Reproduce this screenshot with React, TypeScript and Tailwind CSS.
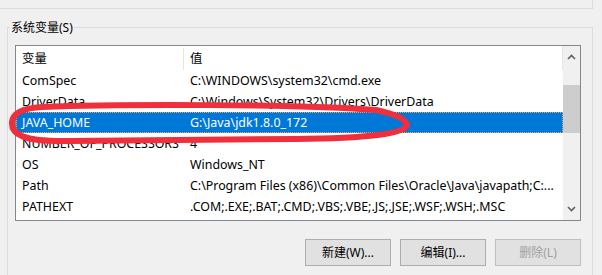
import React from "react";

const ROWS = [
  { name: "ComSpec", value: "C:\\WINDOWS\\system32\\cmd.exe" },
  { name: "DriverData", value: "C:\\Windows\\System32\\Drivers\\DriverData" },
  { name: "JAVA_HOME", value: "G:\\Java\\jdk1.8.0_172", selected: true },
  { name: "NUMBER_OF_PROCESSORS", value: "4" },
  { name: "OS", value: "Windows_NT" },
  { name: "Path", value: "C:\\Program Files (x86)\\Common Files\\Oracle\\Java\\javapath;C:..." },
  { name: "PATHEXT", value: ".COM;.EXE;.BAT;.CMD;.VBS;.VBE;.JS;.JSE;.WSF;.WSH;.MSC" },
];

function Button({ label, disabled }: { label: string; disabled?: boolean }) {
  return (
    <div
      className={`w-[86px] h-[27px] flex items-center justify-center bg-[#e1e1e1] border text-[12px] ${
        disabled ? "text-[#a0a0a0] border-[#bfbfbf]" : "text-black border-[#adadad]"
      }`}
    >
      {label}
    </div>
  );
}

export default function App() {
  return (
    <div
      className="relative w-[602px] h-[275px] overflow-hidden bg-[#f0f0f0] text-[12px] text-black"
      style={{ fontFamily: '"Noto Sans", "Noto Sans CJK SC", sans-serif' }}
    >
      {/* bottom edge of the user variables group */}
      <div className="w-[593px] h-[9px] border-b border-r border-[#dcdcdc]" />

      {/* System variables group box */}
      <div className="relative ml-[7px] mt-[18px] w-[586px] h-[260px] border-t border-l border-r border-[#dcdcdc] pl-[7px] pr-[11px] pt-[17px]">
        <span className="absolute -top-[9px] left-[2px] px-[1px] bg-[#f0f0f0] leading-[18px]">系统变量(S)</span>

        {/* list view */}
        <div className="flex w-[566px] h-[176px] border border-[#828790] bg-white text-[12.4px]">
          <div className="flex-1 flex flex-col">
            <div className="flex h-[24px] items-center border-r border-[#e5e5e5] pt-[2px]">
              <div className="w-[168px] h-full flex items-center pl-[6px] border-r border-[#e5e5e5]">变量</div>
              <div className="pl-[6px]">值</div>
            </div>
            {ROWS.map((r) => (
              <div
                key={r.name}
                className={`flex h-[21px] items-center whitespace-nowrap pt-px ${
                  r.selected ? "bg-[#0078d7] text-white border border-dotted border-[#f5a85a]" : ""
                }`}
              >
                <div className={`w-[168px] ${r.selected ? "pl-[5px]" : "pl-[6px]"}`}>{r.name}</div>
                <div className={r.selected ? "pl-[5px]" : "pl-[6px]"}>{r.value}</div>
              </div>
            ))}
          </div>

          {/* scrollbar */}
          <div className="w-[17px] flex flex-col bg-[#f0f0f0]">
            <div className="h-[22px] flex items-center justify-center">
              <svg width="9" height="6" viewBox="0 0 9 6">
                <path d="M1 5 L4.5 1.5 L8 5" fill="none" stroke="#606060" strokeWidth="1.6" />
              </svg>
            </div>
            <div className="h-[17px]" />
            <div className="h-[48px] bg-[#cdcdcd]" />
            <div className="flex-1" />
            <div className="h-[22px] flex items-center justify-center">
              <svg width="9" height="6" viewBox="0 0 9 6">
                <path d="M1 1 L4.5 4.5 L8 1" fill="none" stroke="#606060" strokeWidth="1.6" />
              </svg>
            </div>
          </div>
        </div>

        {/* buttons */}
        <div className="flex justify-end gap-[9px] w-[566px] mt-[18px]">
          <Button label="新建(W)..." />
          <Button label="编辑(I)..." />
          <Button label="删除(L)" disabled />
        </div>
      </div>

      {/* red hand-drawn annotation */}
      <svg className="absolute left-0 top-0 pointer-events-none" width="602" height="275" viewBox="0 0 602 275">
        <path
          d="M42 107 C120 104, 300 104, 376 110 Q405 116 407 125 Q404 138 296 139 L70 141 C22 142, 11 134, 12 122 C13 112, 24 108, 42 107 Z"
          fill="none"
          stroke="#ef2f3b"
          strokeWidth="6"
          strokeLinejoin="round"
        />
      </svg>
    </div>
  );
}
